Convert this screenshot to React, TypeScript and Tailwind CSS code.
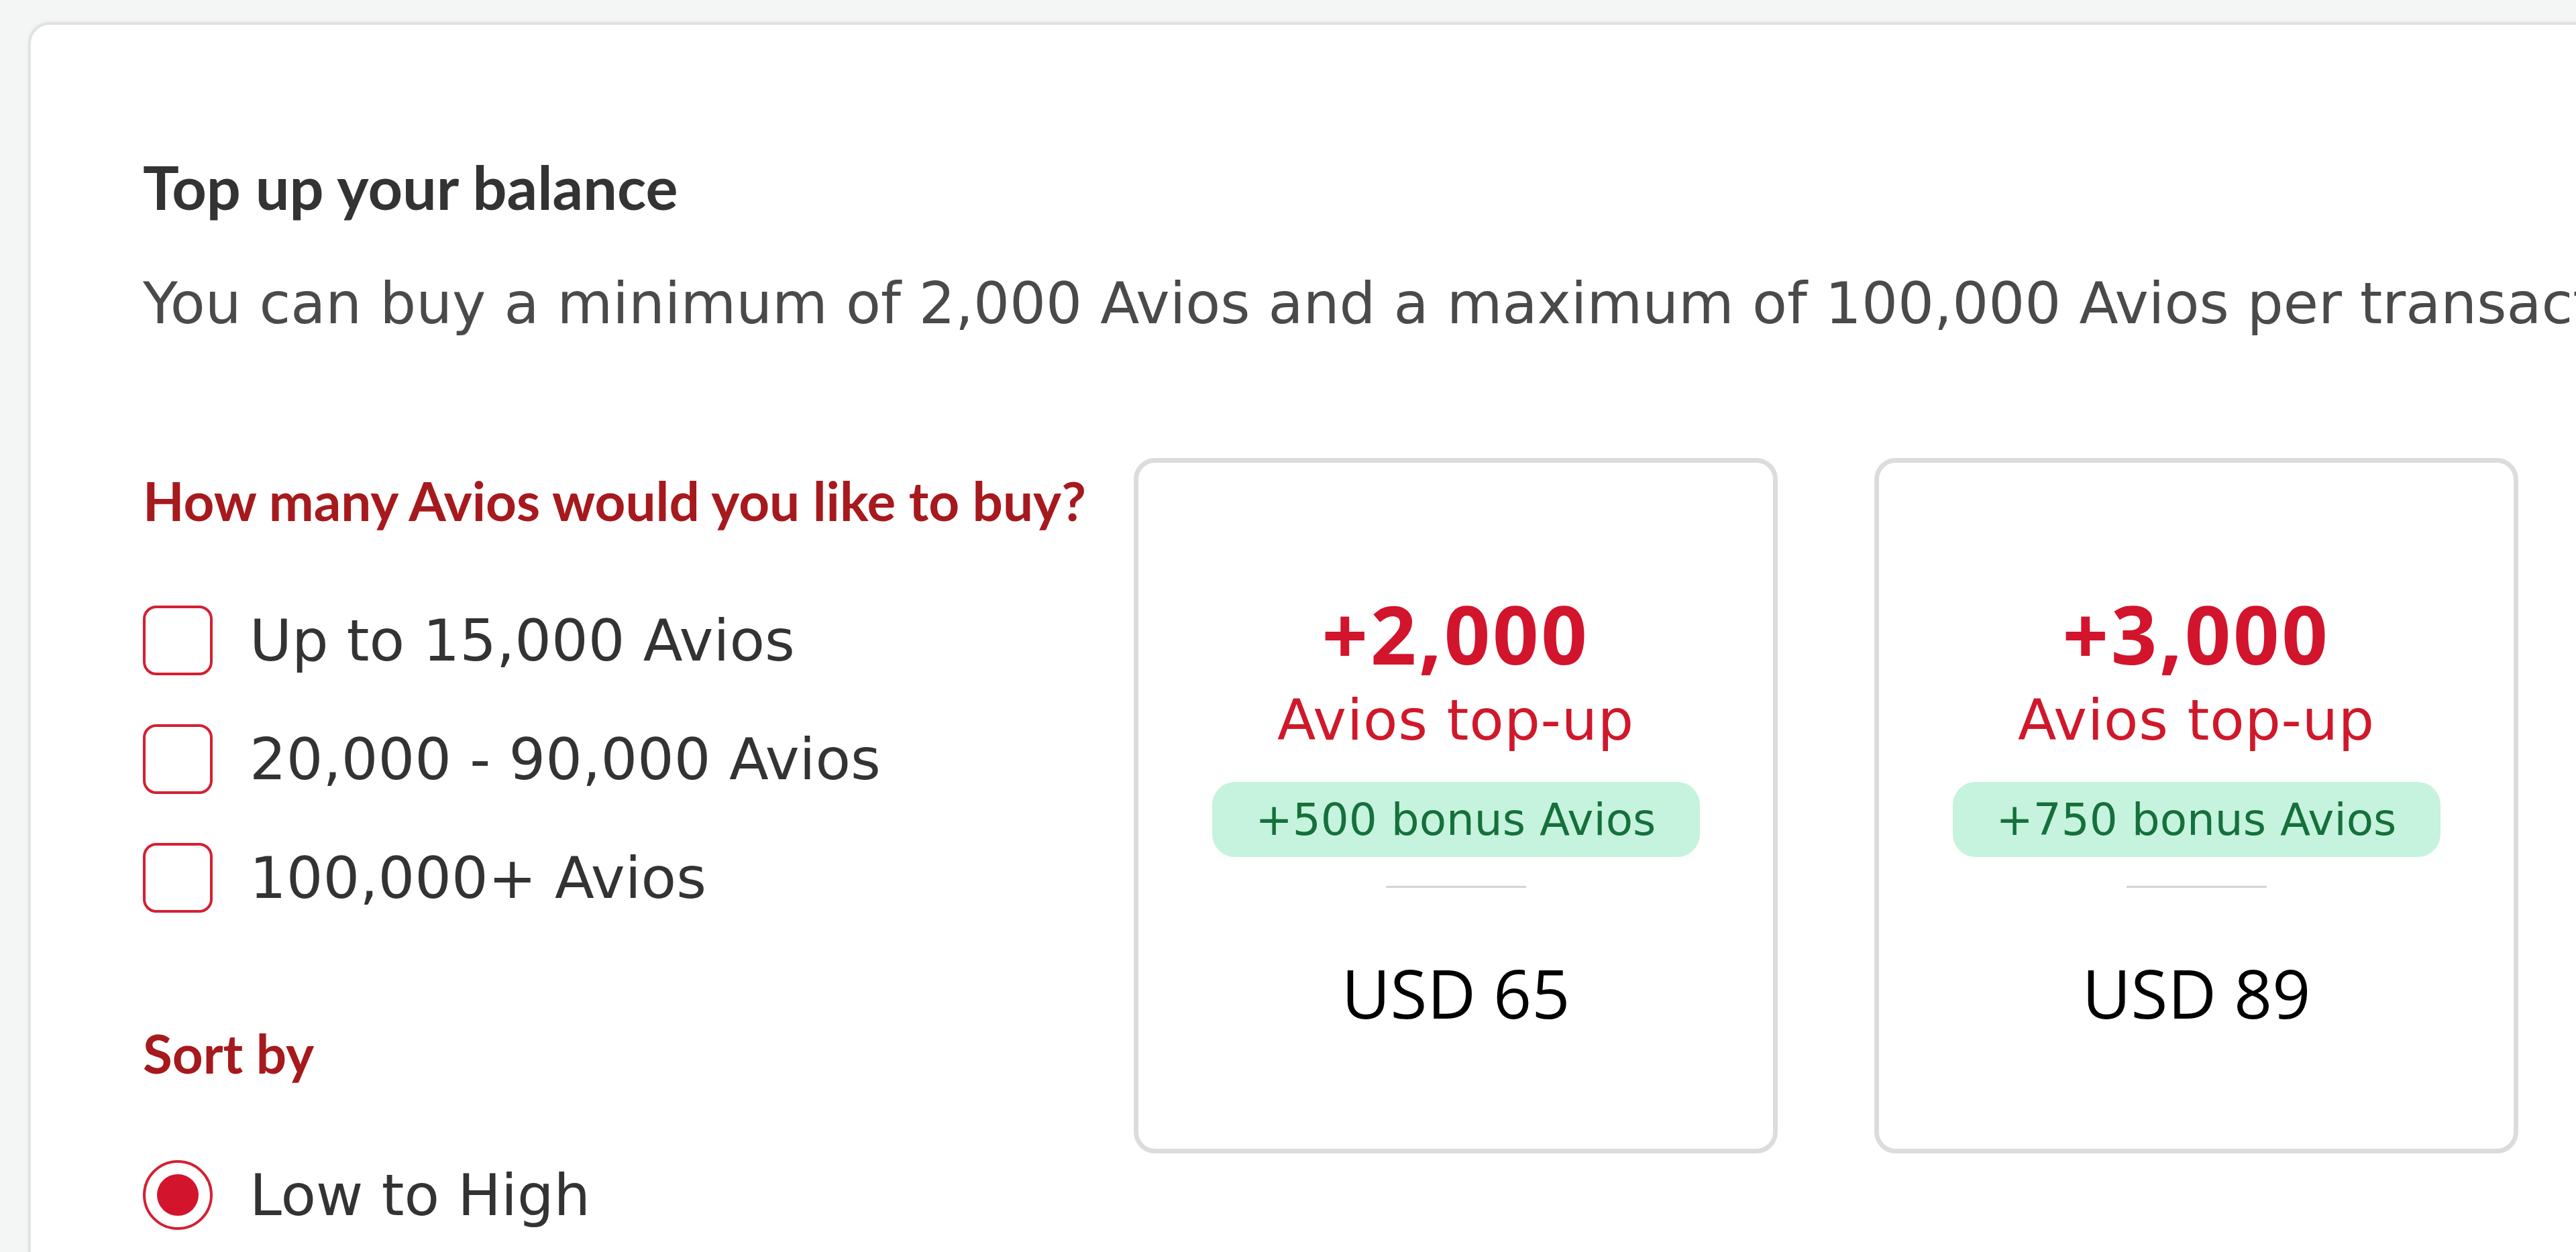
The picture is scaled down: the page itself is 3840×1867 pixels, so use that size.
import { useState } from 'react'

type Bundle = {
  avios: string
  bonus: string
  price: string
}

const bundles: Bundle[] = [
  { avios: '+2,000', bonus: '+500 bonus Avios', price: 'USD 65' },
  { avios: '+3,000', bonus: '+750 bonus Avios', price: 'USD 89' },
]

const ranges = ['Up to 15,000 Avios', '20,000 - 90,000 Avios', '100,000+ Avios']

const headFont = "font-['Lato','Open_Sans',sans-serif]"
const bodyFont = "font-['DejaVu_Sans','Verdana',sans-serif]"

function BundleCard({ bundle }: { bundle: Bundle }) {
  return (
    <div className="flex h-[1037px] w-[960px] shrink-0 flex-col items-center rounded-[32px] border-[7px] border-[#dcdcdc] bg-white pt-[195px]">
      <div className="font-['Open_Sans',sans-serif] text-[120px] leading-[120px] font-bold tracking-[0.03em] text-[#d2142c]">
        {bundle.avios}
      </div>
      <div className={`${bodyFont} mt-[19px] text-[84px] leading-[100px] tracking-[0.01em] text-[#d0182b]`}>
        Avios top-up
      </div>
      <div className={`${bodyFont} mt-[42px] flex h-[112px] items-center rounded-[34px] bg-[#c6f3dd] px-[65px] text-[66px] text-[#15703c]`}>
        {bundle.bonus}
      </div>
      <div className="mt-[43px] h-[3px] w-[209px] bg-[#d4d4d4]" />
      <div className="mt-[106px] font-['Open_Sans',sans-serif] text-[100px] leading-[100px] text-black">
        {bundle.price}
      </div>
    </div>
  )
}

export default function App() {
  const [checked, setChecked] = useState<Record<string, boolean>>({})

  return (
    <div className="h-[1867px] w-[3840px] overflow-hidden bg-[#f4f5f5]">
      <div className="ml-[42px] mt-[33px] w-[4000px] rounded-tl-[32px] border-[4px] border-[#e2e2e2] bg-white pb-[200px] pl-[167px] pt-[191px] shadow-[0_0_6px_rgba(0,0,0,0.06)]">
        <h2 className={`${headFont} text-[90px] leading-[100px] font-bold text-[#333333]`}>
          Top up your balance
        </h2>
        <p className={`${bodyFont} mt-[75px] whitespace-nowrap text-[85px] leading-[100px] text-[#4a4a4a]`}>
          You can buy a minimum of 2,000 Avios and a maximum of 100,000 Avios per transaction.
        </p>

        <div className="mt-[180px] flex items-start">
          <div className="w-[1477px] shrink-0 pt-[15px]">
            <h3 className={`${headFont} text-[80px] leading-[96px] font-bold text-[#a6191d]`}>
              How many Avios would you like to buy?
            </h3>
            <div className="mt-[109px] flex flex-col gap-[73px]">
              {ranges.map((label) => (
                <label key={label} className="flex h-[104px] cursor-pointer items-center gap-[55px]">
                  <input
                    type="checkbox"
                    className="sr-only"
                    checked={!!checked[label]}
                    onChange={() => setChecked((c) => ({ ...c, [label]: !c[label] }))}
                  />
                  <span className="h-[104px] w-[104px] shrink-0 rounded-[20px] border-[4px] border-[#d42033] bg-white" />
                  <span className={`${bodyFont} text-[86px] text-[#333333]`}>{label}</span>
                </label>
              ))}
            </div>

            <h3 className={`${headFont} mt-[161px] text-[80px] leading-[96px] font-bold text-[#a6191d]`}>
              Sort by
            </h3>
            <div className="mt-[112px] flex h-[104px] items-center gap-[55px]">
              <span className="flex h-[104px] w-[104px] shrink-0 items-center justify-center rounded-full border-[4px] border-[#d42033]">
                <span className="h-[62px] w-[62px] rounded-full bg-[#d2142c]" />
              </span>
              <span className={`${bodyFont} text-[86px] text-[#333333]`}>Low to High</span>
            </div>
          </div>

          <div className="flex gap-[144px]">
            {bundles.map((b) => (
              <BundleCard key={b.avios} bundle={b} />
            ))}
          </div>
        </div>
      </div>
    </div>
  )
}
